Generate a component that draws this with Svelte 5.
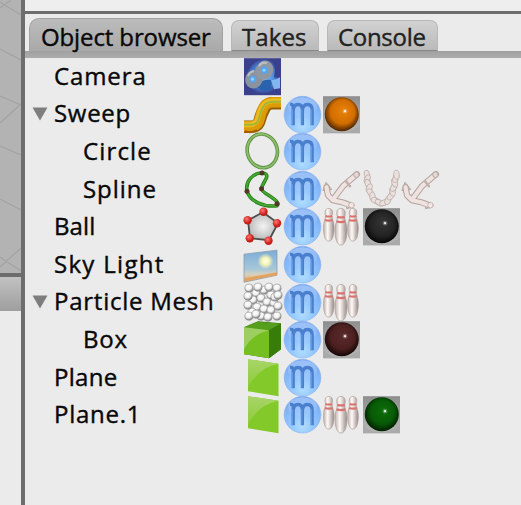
<script>
  const tabs = [
    { label: 'Object browser', active: true, width: 194, pad: 11, ls: -0.12 },
    { label: 'Takes', width: 88, pad: 10, ls: 0.1 },
    { label: 'Console', width: 111, pad: 10, ls: -0.3 }
  ];
  const rows = [
    { name: 'Camera', icons: ['camera'], ls: 0.9 },
    { name: 'Sweep', open: true, icons: ['sweep', 'm', 'orange'], ls: 0.7 },
    { name: 'Circle', child: true, icons: ['circle', 'm'], ls: 1.15 },
    { name: 'Spline', child: true, icons: ['spline', 'm', 'anchor', 'chain', 'anchor'], ls: 0.95 },
    { name: 'Ball', icons: ['ball', 'm', 'pins', 'black'], ls: 0.1 },
    { name: 'Sky Light', icons: ['sky', 'm'], ls: 1.3 },
    { name: 'Particle Mesh', open: true, icons: ['particles', 'm', 'pins'], ls: 0.75 },
    { name: 'Box', child: true, icons: ['box', 'm', 'maroon'], ls: 0.8 },
    { name: 'Plane', icons: ['plane', 'm'], ls: 0.3 },
    { name: 'Plane.1', icons: ['plane', 'm', 'pins', 'green'], ls: 0.75 }
  ];
  const balls = {
    orange: ['#e98308', '#d26d00', '#4a2400'],
    black: ['#363636', '#242424', '#070707'],
    maroon: ['#5c2a2a', '#4c2020', '#160606'],
    green: ['#0d6e0a', '#075a05', '#021f02']
  };
  const beads = [[12, 9], [20, 6], [27, 11], [9, 16], [17, 14], [23, 18], [30, 19], [13, 23], [20, 25], [27, 26], [8, 28], [17, 32], [24, 33], [31, 13], [5, 4], [14, 3], [25, 3], [33, 4], [4, 12], [34, 11], [4, 21], [34, 22], [5, 32], [12, 30], [33, 32]];
  const links = [[4, 3.5, 75], [4.2, 8, 110], [5, 12.5, 65], [6.2, 17, 110], [7.5, 21.5, 50], [9.5, 25.5, 85], [12.5, 29.5, 25], [16.5, 31.5, 30], [21, 31.5, -20], [25, 29, -65], [27.8, 25, -45], [29.5, 20.5, -100], [30.8, 16, -60], [31.6, 11.5, -110], [32.8, 7, -65], [33.5, 3.5, -95]];
</script>

<svg width="0" height="0" class="defs" aria-hidden="true">
  <defs>
    <radialGradient id="mg" cx=".5" cy=".8" r=".8"><stop offset="0" stop-color="#b0deff" /><stop offset=".5" stop-color="#8dc0fc" /><stop offset="1" stop-color="#74a7f3" /></radialGradient>
    <linearGradient id="gloss" x1="0" y1="0" x2="0" y2="1"><stop offset="0" stop-color="#fff" stop-opacity=".5" /><stop offset="1" stop-color="#fff" stop-opacity=".08" /></linearGradient>
    <linearGradient id="cell" x1="0" y1="0" x2="0" y2="1"><stop offset="0" stop-color="#8e8e8e" /><stop offset="1" stop-color="#b8b8b8" /></linearGradient>
    {#each Object.entries(balls) as [k, c]}
      <radialGradient id={'b-' + k} cx=".5" cy=".46" r=".54" fx=".57" fy=".38"><stop offset="0" stop-color={c[0]} /><stop offset=".65" stop-color={c[1]} /><stop offset="1" stop-color={c[2]} /></radialGradient>
    {/each}
    <radialGradient id="poly"><stop offset="0" stop-color="#f4f4f4" /><stop offset="1" stop-color="#b9b9b9" /></radialGradient>
    <radialGradient id="red" cx=".4" cy=".35"><stop offset="0" stop-color="#ff7770" /><stop offset="1" stop-color="#c81c18" /></radialGradient>
    <linearGradient id="sky" x1="0" y1="0" x2="0" y2="1"><stop offset="0" stop-color="#7cacd8" /><stop offset=".6" stop-color="#a8c8d8" /><stop offset=".76" stop-color="#d8d1bc" /><stop offset="1" stop-color="#e5a160" /></linearGradient>
    <radialGradient id="sun"><stop offset="0" stop-color="#fffff0" /><stop offset=".45" stop-color="#f8f5b5" /><stop offset="1" stop-color="#f8f5b5" stop-opacity="0" /></radialGradient>
    <radialGradient id="bead" cx=".42" cy=".32" r=".62"><stop offset="0" stop-color="#fff" /><stop offset=".6" stop-color="#f0f0f0" /><stop offset="1" stop-color="#8c8c8c" /></radialGradient>
    <linearGradient id="pin"><stop offset="0" stop-color="#bfb2ae" /><stop offset=".4" stop-color="#fffaf7" /><stop offset="1" stop-color="#968985" /></linearGradient>
    <radialGradient id="cam"><stop offset="0" stop-color="#8fd0ff" /><stop offset=".6" stop-color="#4a8ade" /><stop offset="1" stop-color="#39418f" /></radialGradient>
    <linearGradient id="leaf" x1="0" y1="0" x2="0" y2="1"><stop offset="0" stop-color="#a9d56a" /><stop offset="1" stop-color="#8ccb38" /></linearGradient>
  </defs>
</svg>

{#snippet icon(kind)}
  <svg class="icon" viewBox="0 0 37 37">
    {#if kind === 'm'}
      <circle cx="18.5" cy="18.5" r="18.4" fill="url(#mg)" stroke="#82aef0" stroke-width=".5" />
      <ellipse cx="18.5" cy="10.5" rx="14.5" ry="9.5" fill="url(#gloss)" opacity=".55" />
      <path d="M6 8.2C8.6 7.8 9.2 9.2 9.2 12V29M9.2 15C9.2 10.5 11 8.3 14 8.3C17.2 8.3 18.4 10.5 18.4 14V29M18.4 15C18.4 10.5 20.4 8.3 23.4 8.3C26.8 8.3 28.2 10.5 28.2 14V29" fill="none" stroke="#4a7fce" stroke-width="3.3" />
      <path d="M8.6 13V28.5M17.8 13V28.5M27.6 13V28.5" stroke="#6698e0" stroke-width="1" />
    {:else if balls[kind]}
      <rect width="37" height="37" fill="url(#cell)" />
      <path d="M0 37V29Q8 36 18 36T37 29V37z" fill="#aaa" />
      <circle cx="18.8" cy="18" r="17" fill={`url(#b-${kind})`} />
      <circle cx="22" cy="15" r="2.4" fill="#fff" opacity=".25" /><circle cx="22" cy="15" r="1.15" fill="#fff" opacity=".85" />
    {:else if kind === 'camera'}
      <rect width="37" height="37" fill="#39418d" />
      <path d="M3 29Q-1 20 5 11Q13 -2 26 1Q33 6 30 19L37 20V31L25 35Q10 38 3 29z" fill="url(#cam)" />
      <path d="M12 27Q20 20 28 22L27 31Q19 36 12 27z" fill="#2b62ad" />
      <path d="M27 22L32 21 36 19V30L30 31z" fill="#83b6ee" />
      <ellipse cx="10" cy="21" rx="8.6" ry="9.4" fill="#8b939f" transform="rotate(25 10 21)" />
      <ellipse cx="20.5" cy="12" rx="8.6" ry="9.8" fill="#9098a2" transform="rotate(25 20.5 12)" />
      <path d="M15 8Q18 3 23 5M4 18Q6 13 10 13" fill="none" stroke="#b9bec4" stroke-width="2" />
      <circle cx="9" cy="21" r="3.4" fill="#56a5f1" /><circle cx="20.5" cy="12" r="3.6" fill="#56a5f1" />
      <circle cx="8.5" cy="21" r="1.6" fill="#91d1ff" /><circle cx="20" cy="12" r="1.6" fill="#91d1ff" />
    {:else if kind === 'sweep'}
      <path d="M0 30.5H6C17 31 15 23 18 17S22 7 29 7H37" fill="none" stroke="#956000" stroke-width="12.5" />
      <path d="M0 30H6C16.5 30 15 22.5 17.5 16S22 6 29 6H37" fill="none" stroke="#dd9b08" stroke-width="10.5" />
      <path d="M0 28.5H6C14.5 28 13.5 21 16 15S21 5 29 4.5H37" fill="none" stroke="#ebbb22" stroke-width="5" />
      <path d="M0 28.5H7C15.5 28.5 14.5 22 17 15.5S22 5.5 29 5.5H37" fill="none" stroke="#a3b634" stroke-width="2" />
      <path d="M1 35Q7 37.5 13 34" fill="none" stroke="#a45f00" stroke-width="2" />
    {:else if kind === 'circle'}
      <ellipse cx="18.3" cy="17.7" rx="15" ry="17" transform="rotate(-16 18.3 17.7)" fill="none" stroke="#5b8d3f" stroke-width="3.6" />
      <ellipse cx="18.3" cy="17.7" rx="15" ry="17" transform="rotate(-16 18.3 17.7)" fill="none" stroke="#8cc06c" stroke-width="1.8" />
    {:else if kind === 'spline'}
      <path d="M18 1.5C9 2 1 10 3 20C6 30 19 36 33 34.5C38 29 17 22 17.5 17.5C18 11 29 3 18 1.5z" fill="none" stroke="#27801b" stroke-width="3.6" />
      <path d="M18 1.5C9 2 1 10 3 20C6 30 19 36 33 34.5C38 29 17 22 17.5 17.5C18 11 29 3 18 1.5z" fill="none" stroke="#49ab31" stroke-width="1.6" />
      {#each [[18, 1.8], [3, 20], [17.5, 17.5], [33, 32.5]] as p}<circle cx={p[0]} cy={p[1]} r="2.5" fill="#563529" />{/each}
    {:else if kind === 'anchor'}
      <g stroke-linejoin="round" stroke-linecap="round">
        <path d="M0 19L3 11 8.5 18zM24 30L31 35 24 37.5z" fill="#dccfcb" stroke="#b9a7a2" />
        <path d="M34 3L20 15 11 27M3.5 16L5 24 10 29 19 31 27 34" fill="none" stroke="#b5a39e" stroke-width="6.2" />
        <path d="M34 3L20 15 11 27M3.5 16L5 24 10 29 19 31 27 34" fill="none" stroke="#eee3e0" stroke-width="4.2" />
        <path d="M23 10L27 15" stroke="#c2b0ab" stroke-width="2.5" />
        <circle cx="33.5" cy="3.5" r="2.8" fill="#e5d9d6" stroke="#b9a7a2" /><circle cx="28.5" cy="34" r="2.8" fill="#f2e8e5" stroke="#b9a7a2" stroke-width=".8" />
      </g>
    {:else if kind === 'chain'}
      <path d="M4 4C5 19 10 32 18.5 32S31 19 33 4" fill="none" stroke="#c4b6b1" stroke-width="5.5" />
      {#each links as l}<ellipse cx={l[0]} cy={l[1]} rx="4.6" ry="2.7" transform={`rotate(${l[2]} ${l[0]} ${l[1]})`} fill="#eae1de" stroke="#c3b4af" stroke-width=".9" />{/each}
    {:else if kind === 'ball'}
      <path d="M19 4L34 15 25 32 6 30 4 12z" fill="url(#poly)" stroke="#4d4d4d" stroke-width="1.8" />
      {#each [[19.5, 3.5], [33, 15], [24.5, 32.5], [5.8, 30], [3.6, 12]] as p}<circle cx={p[0]} cy={p[1]} r="4.2" fill="url(#red)" />{/each}
    {:else if kind === 'pins'}
      {#each [[5.8, 0, 0.92], [30, 0, 0.92], [18, 0, 1.03]] as p}
        <g transform={`translate(${p[0]} ${p[1]}) scale(${p[2]} ${p[2]})`}>
          <path d="M0 .3C4.6 .3 4.5 5 3.6 8C3.4 12 5.8 15 5.8 21C5.8 28 4.5 35.8 0 35.8S-5.8 28 -5.8 21C-5.8 15 -3.4 12 -3.6 8C-4.5 5 -4.6 .3 0 .3z" fill="url(#pin)" stroke="#aa9c98" stroke-width=".7" />
          <path d="M-3.6 8.4Q0 9.6 3.6 8.4M-4.2 12.8Q0 14.2 4.2 12.8" fill="none" stroke="#da736d" stroke-width="2.2" />
        </g>
      {/each}
    {:else if kind === 'sky'}
      <path d="M0 8L33 4V29L0 36z" fill="url(#sky)" stroke="#8a9dab" stroke-width=".8" />
      <path d="M1 32L33 26V29L1 35z" fill="#e4a261" /><circle cx="21.5" cy="15" r="8" fill="url(#sun)" />
    {:else if kind === 'particles'}
      {#each beads as b}<circle cx={b[0]} cy={b[1]} r="4.1" fill="url(#bead)" stroke="#8d8d8d" stroke-width=".6" />{/each}
    {:else if kind === 'box'}
      <path d="M0 6L14 0 37 2V28L25 37 0 33z" fill="#367909" />
      <path d="M0 6L14 .5 37 2.5 25 9z" fill="#559f1d" /><path d="M0 6L25 9V37L0 33z" fill="#76bf22" />
      <path d="M0 6L25 9Q8 13 0 28z" fill="#9dce62" /><path d="M25 9L37 2.5V28L25 37z" fill="#387c0a" />
    {:else if kind === 'plane'}
      <path d="M4 0L34.5 4.5V37L4 32z" fill="#84c92a" />
      <path d="M4 0L34.5 4.5Q13 9 4 29z" fill="url(#leaf)" />
    {/if}
  </svg>
{/snippet}

<div class="app">
  <aside>
    <div class="view">
      <svg width="21" height="273"><path d="M0 2L21 15M0 8L11 0M0 49L21 60M0 96L21 105M0 123L21 104M0 146L21 155M0 199L21 210M0 257L21 271M0 267L21 248" stroke="#a4a4a4" stroke-width="1.3" fill="none" /></svg>
    </div>
    <div class="subhead"></div>
  </aside>
  <main>
    <div class="upper"></div>
    <nav>
      {#each tabs as t}
        <div class="tab" class:active={t.active} style:width={t.width + 'px'} style:padding-left={t.pad + 'px'} style:letter-spacing={t.ls + 'px'}>{t.label}</div>
      {/each}
    </nav>
    <div class="shelf"></div>
    <div class="tree">
      {#each rows as r}
        <div class="row">
          <div class="toggle">{#if r.open}<svg width="16" height="14"><path d="M.5 .5H15.5L8 13.5z" fill="#7e7e7e" /></svg>{/if}</div>
          <div class="name" class:child={r.child} style:letter-spacing={r.ls + 'px'}>{r.name}</div>
          <div class="icons">{#each r.icons as k}{@render icon(k)}{/each}</div>
        </div>
      {/each}
    </div>
  </main>
</div>

<style>
  .defs { position: absolute; }
  .app { display: flex; width: 521px; height: 505px; overflow: hidden; background: #ebebeb; font-family: "Open Sans", "Noto Sans", sans-serif; font-size: 24px; color: #080808; -webkit-text-stroke: 0.4px currentColor; }
  aside { box-sizing: border-box; width: 25px; border-right: 4px solid #6d6d6d; flex: none; }
  .view { height: 273px; background: #b3b3b3; border-bottom: 4px solid #6d6d6d; }
  .view svg { display: block; }
  .subhead { height: 34px; background: linear-gradient(#c2c2c2, #9e9e9e); }
  main { flex: 1; min-width: 0; }
  .upper { height: 11px; background: #eee; border-bottom: 3px solid #6d6d6d; }
  nav { display: flex; align-items: flex-end; height: 37px; padding-left: 4px; gap: 8px; }
  .tab { box-sizing: border-box; flex: none; height: 31px; line-height: 31px; border-radius: 8px 8px 0 0; background: linear-gradient(#d2d2d2, #bababa); border: 1px solid #b8b8b8; border-bottom: 1px solid #888; white-space: nowrap; color: #222; }
  .tab.active { height: 33px; line-height: 35px; background: linear-gradient(#bcbcbc, #a9a9a9); border-color: #a2a2a2; border-bottom: 0; border-radius: 10px 10px 0 0; color: #080808; }
  .shelf { height: 7px; background: linear-gradient(#a0a0a0, #adadad); }
  .row { display: flex; align-items: center; height: 37.6px; }
  .toggle { width: 29px; padding-left: 7px; box-sizing: border-box; line-height: 0; }
  .name { width: 190px; line-height: 36px; white-space: nowrap; box-sizing: border-box; padding-bottom: 2px; }
  .name.child { padding-left: 29px; }
  .icons { display: flex; gap: 2.6px; }
  .icon { display: block; width: 37px; height: 37.4px; overflow: visible; }
</style>
